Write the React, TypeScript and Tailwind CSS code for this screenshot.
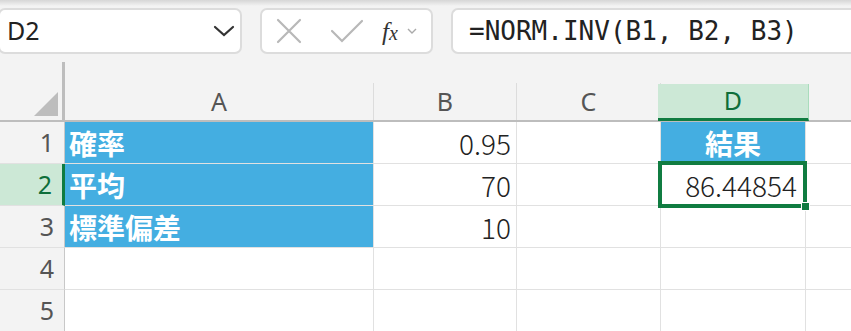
import React from "react";

const cols = ["A", "B", "C", "D"];

const cellFont = { fontFamily: '"Noto Sans CJK JP", "Noto Sans", sans-serif' };

const RowHead: React.FC<{ n: number; active?: boolean }> = ({ n, active }) => (
  <div
    className={`flex items-center justify-end pr-[10px] text-[25px] border-b border-[#e1e1e1] ${
      active
        ? "bg-[#cce8d6] text-[#0e6e3a] border-r-[3px] border-r-[#107c41]"
        : "bg-[#f3f3f3] text-[#555] border-r border-r-[#c8c8c8]"
    }`}
    style={{ fontFamily: '"Noto Sans", sans-serif' }}
  >
    {n}
  </div>
);

const Cell: React.FC<{
  children?: React.ReactNode;
  blue?: boolean;
  align?: "left" | "right" | "center";
  last?: boolean;
}> = ({ children, blue, align = "left", last }) => (
  <div
    className={`flex items-center text-[28px] leading-none border-b border-[#e1e1e1] ${
      last ? "" : "border-r"
    } ${blue ? "bg-[#44aee1] text-white font-semibold border-[#44aee1]" : "bg-white text-[#222] font-light"} ${
      align === "right" ? "justify-end pr-[5px]" : align === "center" ? "justify-center" : "pl-[4px]"
    }`}
    style={cellFont}
  >
    {children}
  </div>
);

export default function App() {
  return (
    <div className="w-[851px] h-[331px] overflow-hidden bg-[#f3f3f3] relative">
      <div className="absolute top-0 left-0 right-0 h-[6px] bg-gradient-to-b from-[#d6d6d6] to-[#f3f3f3]" />
      {/* toolbar */}
      <div className="h-[62px] flex items-start pt-[8px] gap-[18px]">
        <div className="w-[244px] h-[46px] ml-[-2px] bg-white border-2 border-[#dcdcdc] rounded-[7px] flex items-center justify-between pl-[7px] pr-[5px]">
          <span className="text-[25px] text-[#222]" style={{ fontFamily: '"Noto Sans", sans-serif' }}>
            D2
          </span>
          <svg width="22" height="12" viewBox="0 0 22 12" fill="none" stroke="#333" strokeWidth="2.2" strokeLinecap="round">
            <path d="M2 2 L11 10 L20 2" />
          </svg>
        </div>
        <div className="w-[173px] h-[46px] bg-white border-2 border-[#dcdcdc] rounded-[7px] flex items-center pl-[14px]">
          <svg width="26" height="26" viewBox="0 0 26 26" stroke="#b8b8b8" strokeWidth="2.2" strokeLinecap="round">
            <path d="M2 2 L24 24 M24 2 L2 24" />
          </svg>
          <svg className="ml-[28px]" width="34" height="24" viewBox="0 0 34 24" fill="none" stroke="#b8b8b8" strokeWidth="2.2" strokeLinecap="round">
            <path d="M2 12 L12 22 L32 2" />
          </svg>
          <span
            className="ml-[18px] text-[25px] italic text-[#333] leading-none"
            style={{ fontFamily: '"Liberation Serif", serif' }}
          >
            f<span className="text-[20px]">x</span>
          </span>
          <svg className="ml-[9px]" width="10" height="6" viewBox="0 0 10 6" fill="none" stroke="#aaa" strokeWidth="1.4">
            <path d="M1 1 L5 5 L9 1" />
          </svg>
        </div>
        <div className="flex-1 h-[46px] bg-white border-2 border-[#dcdcdc] rounded-l-[7px] border-r-0 flex items-center pl-[16px]">
          <span className="text-[26px] text-[#222]" style={{ fontFamily: '"DejaVu Sans Mono", monospace' }}>
            =NORM.INV(B1, B2, B3)
          </span>
        </div>
      </div>

      {/* grid */}
      <div>
        <div className="grid grid-cols-[65px_309px_143px_144px_145px_1fr] h-[60px] border-b-2 border-[#bdbdbd]">
          <div className="relative border-r-[3px] border-[#bdbdbd] flex items-end justify-end pr-[4px] pb-[4px]">
            <svg width="24" height="24" viewBox="0 0 24 24">
              <polygon points="24,0 24,24 0,24" fill="#bdbdbd" />
            </svg>
          </div>
          {cols.map((c) => (
            <div key={c} className="flex flex-col justify-end">
              <div
                className={`h-[37px] flex items-center justify-center text-[25px] border-r ${
                  c === "D"
                    ? "bg-[#cce8d6] text-[#0e6e3a] border-[#a9dcbc] border-b-[3px] border-b-[#107c41] -mx-[3px] mb-[-1px]"
                    : "text-[#555] border-[#dcdcdc]"
                }`}
                style={{ fontFamily: '"Noto Sans", sans-serif' }}
              >
                {c}
              </div>
            </div>
          ))}
          <div />
        </div>

        <div className="grid grid-cols-[65px_309px_143px_144px_145px_1fr] grid-rows-[42px_42px_42px_42px_42px]">
          <RowHead n={1} />
          <Cell blue>確率</Cell>
          <Cell align="right">0.95</Cell>
          <Cell />
          <Cell blue align="center">結果</Cell>
          <Cell last />

          <RowHead n={2} active />
          <Cell blue>平均</Cell>
          <Cell align="right">70</Cell>
          <Cell />
          <div className="relative bg-white border-b border-r border-[#e1e1e1]">
            <div className="absolute -left-[3px] -top-[3px] -right-[2px] -bottom-[3px] border-[4px] border-[#107c41] flex items-center justify-end pr-[6px]">
              <span className="text-[28px] leading-none font-light text-[#222]" style={cellFont}>
                86.44854
              </span>
            </div>
            <div className="absolute -right-[5px] -bottom-[6px] w-[9px] h-[9px] bg-[#107c41] border border-white" />
          </div>
          <Cell last />

          <RowHead n={3} />
          <Cell blue>標準偏差</Cell>
          <Cell align="right">10</Cell>
          <Cell />
          <Cell />
          <Cell last />

          <RowHead n={4} />
          <Cell />
          <Cell />
          <Cell />
          <Cell />
          <Cell last />

          <RowHead n={5} />
          <Cell />
          <Cell />
          <Cell />
          <Cell />
          <Cell last />
        </div>
      </div>
    </div>
  );
}
